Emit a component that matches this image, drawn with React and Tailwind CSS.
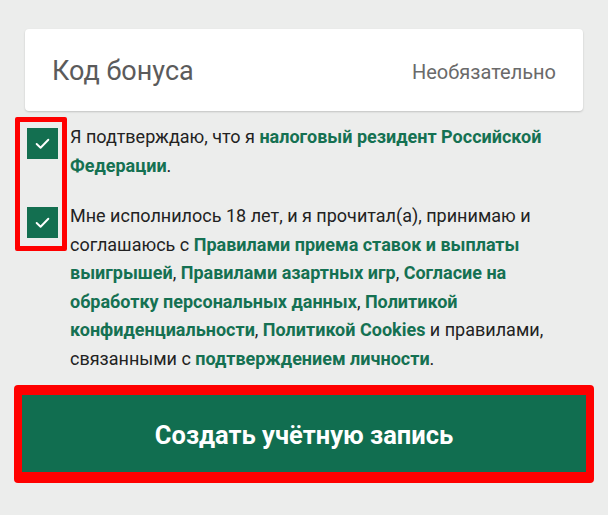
const Check = () => (
    <div className="w-[31px] h-[31px] bg-[#136f50] flex items-center justify-center shrink-0">
        <svg width="17" height="17" viewBox="0 0 16 16" fill="none">
            <path d="M2.5 8.5 L6.2 12 L13.5 4.5" stroke="white" strokeWidth="1.8" strokeLinecap="round" strokeLinejoin="round" />
        </svg>
    </div>
)

const L = ({ children }) => <span className="font-bold text-[#157152]">{children}</span>

export default function App() {
    return (
        <div className="w-[608px] h-[515px] bg-[#ecedec] overflow-hidden relative" style={{ fontFamily: 'Roboto, "Noto Sans", sans-serif' }}>
            <div className="pt-[29px] px-[25px]">
                <div className="h-[82px] bg-white rounded-[4px] shadow-[0_1px_2px_rgba(0,0,0,0.18)] flex items-center justify-between pl-[27px] pr-[27px] pt-[3px]">
                    <span className="text-[27px] text-[#5b5b5b]">Код бонуса</span>
                    <span className="text-[20px] text-[#6a6a6a]">Необязательно</span>
                </div>
            </div>

            <div className="pl-[27px] pr-[44px] mt-[12px] text-[18px] leading-[28.5px] text-[#222]">
                <div className="flex gap-[12px]">
                    <div className="pt-[5px]"><Check /></div>
                    <p>
                        Я подтверждаю, что я <L>налоговый резидент Российской Федерации</L>.
                    </p>
                </div>
                <div className="flex gap-[12px] mt-[22px]">
                    <div className="pt-[5px]"><Check /></div>
                    <p>
                        Мне исполнилось 18 лет, и я прочитал(а), принимаю и соглашаюсь с <L>Правилами приема ставок и выплаты выигрышей</L>, <L>Правилами азартных игр</L>, <L>Согласие на обработку персональных данных</L>, <L>Политикой конфиденциальности</L>, <L>Политикой Cookies</L> и правилами, связанными с <L>подтверждением личности</L>.
                    </p>
                </div>
            </div>

            <div className="absolute left-[15px] top-[117px] w-[52px] h-[134px] border-[5px] border-[#f00] rounded-[2px]" />

            <div className="mx-[14px] mt-[12px] bg-[#f00] rounded-[4px] pt-[10px] px-[8px] pb-[11px]">
                <button className="w-full h-[77px] bg-[#116e50] text-white text-[25.5px] font-bold pt-[4px]">
                    Создать учётную запись
                </button>
            </div>
        </div>
    )
}
